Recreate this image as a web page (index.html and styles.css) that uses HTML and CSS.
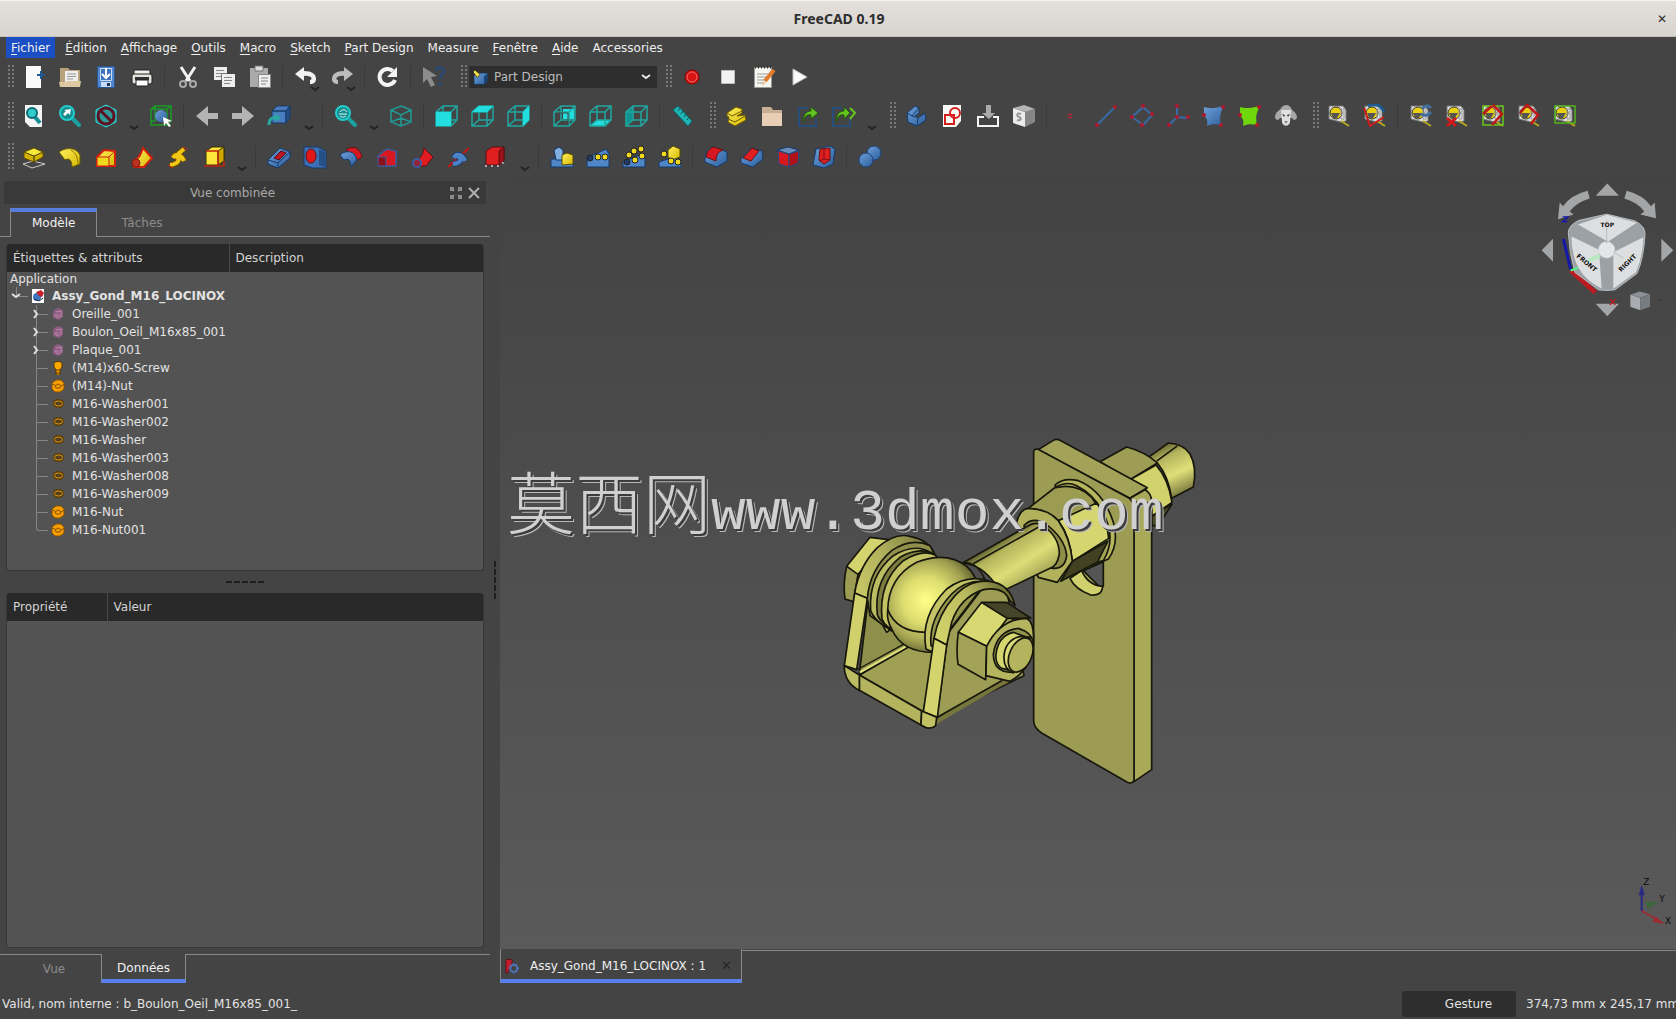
FILE: index.html
```html
<!DOCTYPE html>
<html lang="fr">
<head>
<meta charset="utf-8">
<title>FreeCAD 0.19</title>
<link rel="stylesheet" href="styles.css">
</head>
<body>
<svg class="defs" aria-hidden="true">
  <defs>
    <linearGradient id="gBlue" x1="0" y1="0" x2="1" y2="1"><stop offset="0" stop-color="#6f9fd8"/><stop offset="1" stop-color="#2c5f9e"/></linearGradient>
    <linearGradient id="gYellow" x1="0" y1="0" x2="1" y2="1"><stop offset="0" stop-color="#fff060"/><stop offset="1" stop-color="#d8b800"/></linearGradient>
  </defs>
  <symbol id="new" viewBox="0 0 24 24"><path fill="#fafafa" d="M4 1h15v22H4z"/><path stroke="#205a94" stroke-width="2" d="M19 6v8M15 10h8"/></symbol>
  <symbol id="open" viewBox="0 0 24 24"><path fill="#b8a27c" d="M2 3h8l2 2h10v15H2z"/><path fill="#eee" d="M7 6h13v11H7z"/><path stroke="#999" d="M9 9h9M9 11.500h9M9 14h6"/><path fill="#dcc8a2" d="M1 17h7l2-1h13l-1 6H2z"/></symbol>
  <symbol id="save" viewBox="0 0 24 24"><path fill="#4f86cf" stroke="#2b558d" d="M3.500 1.500h17v21h-17z"/><path fill="#3f74bd" stroke="#c9dbf2" d="M6.500 3.500h11v12h-11z"/><path fill="#c9dbf2" d="M7 17h10v5H7z"/><path stroke="#fff" fill="none" stroke-width="2" d="M12 3v9M8 9l4 4 4-4"/><path fill="#235" d="M13 18h3v3h-3z"/></symbol>
  <symbol id="print" viewBox="0 0 24 24"><path fill="#f0f0ea" stroke="#222" d="M4 5h16v5H4z"/><rect x="2" y="9" width="20" height="10" rx="2" fill="#e4e4dc" stroke="#222"/><path fill="#333" d="M5 12h14v3H5z"/><path fill="#fff" stroke="#222" d="M6 15h12v6H6z"/></symbol>
  <symbol id="cut" viewBox="0 0 24 24"><path stroke="#f2f2f2" stroke-width="3" d="M5 2l9 14M19 2l-9 14"/><g fill="none" stroke="#a9a9a9" stroke-width="2"><circle cx="7" cy="19" r="3"/><circle cx="17" cy="19" r="3"/></g></symbol>
  <symbol id="copy" viewBox="0 0 24 24"><path fill="#eee" d="M2 2h13v13H2zM10 9h13v13H10z"/><path stroke="#888" d="M4 5.500h8M4 8.500h8M4 11.500h5M12 12.500h8M12 15.500h8M12 18.500h6"/><path fill="none" stroke="#777" d="M9.500 15V8.500H15"/></symbol>
  <symbol id="paste" viewBox="0 0 24 24"><path fill="#aaa" d="M2 3h18v19H2z"/><path fill="#ddd" stroke="#777" d="M7 1h8v5H7z"/><path fill="#eee" stroke="#888" d="M10.500 9.500h12v13h-12z"/><path stroke="#888" d="M13 13h7M13 16h7M13 19h5"/></symbol>
  <symbol id="undo" viewBox="0 0 24 24"><path fill="#f2f2f2" d="M1 9l9-7v4c8 0 12 3 12 8 0 4-3 5-6 5v-4c3 0 2-5-6-4v5z"/></symbol>
  <symbol id="redo" viewBox="0 0 24 24"><path fill="#bdbdbd" d="M23 9l-9-7v4C6 6 2 9 2 14c0 4 3 5 6 5v-4c-3 0-2-5 6-4v5z"/></symbol>
  <symbol id="refresh" viewBox="0 0 24 24"><path fill="none" stroke="#f4f4f4" stroke-width="4" d="M17 6A8 8 0 1 0 19 15"/><path fill="#f4f4f4" d="M21 2v10H11z"/></symbol>
  <symbol id="whats" viewBox="0 0 24 24"><path fill="#8b8b8b" d="M1 2l14 9-6 1 4 8-4 2-4-8-4 4z"/><path fill="none" stroke="#2d4a70" stroke-width="3" d="M14 6c1-5 8-4 8 0 0 3-4 3-4 8"/><circle cx="18" cy="19" r="2" fill="#2d4a70"/></symbol>
  <symbol id="pd" viewBox="0 0 24 24"><path fill="url(#gBlue)" stroke="#15365f" d="M3 10l5-4h15v12l-5 5H3z"/><path fill="#f0e040" stroke="#222" d="M4 1l8 7-4 5-6-8z"/><path fill="#1d4479" d="M18 11l5-4v11l-5 5z"/></symbol>
  <symbol id="record" viewBox="0 0 24 24"><circle cx="12" cy="12" r="7" fill="#d81414" stroke="#8a0000"/><circle cx="12" cy="12" r="5" fill="none" stroke="#ee6a6a"/></symbol>
  <symbol id="stop" viewBox="0 0 24 24"><path fill="#f2f2f2" stroke="#bbb" d="M5.500 5.500h13v13h-13z"/></symbol>
  <symbol id="edit" viewBox="0 0 24 24"><path fill="#f6f6f0" stroke="#999" d="M2.500 2.500h17v20h-17z"/><path stroke="#999" d="M5 9h12M5 12h12M5 15h8M5 18h7"/><path stroke="#333" stroke-width="3" stroke-dasharray="1 2" d="M3 2h16"/><path stroke="#e07a28" stroke-width="4" d="M22 5l-9 11"/><path fill="#e8c8a0" d="M14 18l-4 3 1-5z"/></symbol>
  <symbol id="play" viewBox="0 0 24 24"><path fill="#fafafa" stroke="#bbb" d="M5 4l14 8-14 8z"/></symbol>
  <symbol id="mag" viewBox="0 0 24 24"><path stroke="#1aa0a0" stroke-width="4" stroke-linecap="round" d="M13 13l8 8"/><circle cx="9" cy="9" r="7" fill="#178c8c" stroke="#2cc" stroke-width="2"/></symbol>
  <symbol id="fitall" viewBox="0 0 24 24"><path fill="#f4f4f4" d="M3 1h17v22H8l-5-5z"/><path stroke="#178f94" stroke-width="4" d="M13 13l5 6"/><circle cx="10" cy="9" r="5" fill="#3cc" stroke="#0d6c74" stroke-width="2"/></symbol>
  <symbol id="fitsel" viewBox="0 0 24 24"><use href="#mag"/><path fill="#fff" d="M13 5l-1 6-2-2-3 3-2-2 3-3-2-1z"/></symbol>
  <symbol id="draw" viewBox="0 0 24 24"><path fill="#2f9a96" stroke="#2dd" d="M12 1l10 5v12l-10 5-10-5V6z"/><circle cx="12" cy="12" r="8" fill="none" stroke="#5e1224" stroke-width="3"/><path stroke="#5e1224" stroke-width="3" d="M6 6l12 12"/></symbol>
  <symbol id="bbox" viewBox="0 0 24 24"><path fill="none" stroke="#1a9a28" stroke-width="1.500" d="M2 5l4-3h16v15l-4 4H2zM2 5h16v16M18 5l4-3M6 2v15H2"/><circle cx="12" cy="12" r="6" fill="url(#gBlue)"/><path fill="#fff" d="M14 13l9 4-4 1 3 4-2 1-3-4-2 3z"/></symbol>
  <symbol id="left" viewBox="0 0 24 24"><path fill="#b4b4b4" d="M1 12l12-10v7h10v6H13v7z"/></symbol>
  <symbol id="right" viewBox="0 0 24 24"><path fill="#b4b4b4" d="M23 12L11 2v7H1v6h10v7z"/></symbol>
  <symbol id="link" viewBox="0 0 24 24"><path fill="#4a7dc0" stroke="#173a66" d="M5 7l5-5h13l-4 5zM5 7h14v12H5z"/><path fill="#274f87" stroke="#173a66" d="M19 7l4-5v12l-4 5z"/><path fill="none" stroke="#28a8a0" stroke-width="3" d="M2 21c0-6 3-8 7-7"/><path fill="#28a8a0" d="M8 9l6 5-6 4z"/></symbol>
  <symbol id="zoom" viewBox="0 0 24 24"><use href="#mag"/><path stroke="#dff" fill="none" d="M6 8c2-3 5-3 7 0M5 10h8M6 12c2 2 4 1 6 0"/></symbol>
  <symbol id="wire" viewBox="0 0 24 24"><path fill="none" stroke="#1f9a92" stroke-width="1.500" d="M12 2l10 4v12l-10 4-10-4V6zM2 6l10 5 10-5M12 11v11M2 18l10-4 10 4"/></symbol>
  <symbol id="cube" viewBox="0 0 24 24"><path fill="none" stroke="#1fa7a0" stroke-width="1.500" d="M1 8l7-6h14v14l-6 6H1zM1 8h15v14M16 8l6-6M8 2v14h14M1 22l7-6"/></symbol>
  <symbol id="front" viewBox="0 0 24 24"><use href="#cube"/><path fill="#22dede" d="M1 8h15v14H1z"/></symbol>
  <symbol id="top" viewBox="0 0 24 24"><use href="#cube"/><path fill="#22dede" d="M1 8l7-6h14l-6 6z"/></symbol>
  <symbol id="rightv" viewBox="0 0 24 24"><use href="#cube"/><path fill="#22dede" d="M16 8l6-6v14l-6 6z"/></symbol>
  <symbol id="rear" viewBox="0 0 24 24"><path fill="#22dede" d="M10 5h11v10H10z"/><use href="#cube"/><path fill="none" stroke="#444" d="M3 9h12v12"/></symbol>
  <symbol id="bottom" viewBox="0 0 24 24"><path fill="#22dede" d="M1 22l7-6h14l-6 6z"/><use href="#cube"/></symbol>
  <symbol id="leftv" viewBox="0 0 24 24"><path fill="#139090" d="M1 8l7-6v14l-7 6z"/><use href="#cube"/></symbol>
  <symbol id="ruler" viewBox="0 0 24 24"><path fill="#1fb5b5" stroke="#0c6a6c" d="M2 6l5-4 14 15-4 5z"/><path stroke="#0a5557" d="M9 4L7 7M12 7l-2 3M15 10l-2 3M18 13l-2 3"/></symbol>
  <symbol id="part" viewBox="0 0 24 24"><path fill="url(#gYellow)" stroke="#6b5a00" d="M3 9l9-6 6 2v4l-5 3 8-1 1 5-11 6-7-4 1-5-2-1z"/><path fill="none" stroke="#6b5a00" d="M3 9l5 3 10-5M4 15l7 3 10-6"/></symbol>
  <symbol id="group" viewBox="0 0 24 24"><path fill="#c7ae94" d="M2 3h9l2 3h9v16H2z"/><path fill="#e8cfb4" d="M2 9h20v13H2z"/></symbol>
  <symbol id="mklink" viewBox="0 0 24 24"><path fill="none" stroke="#274e7a" stroke-width="2" d="M12 4H3v18h17v-7"/><path fill="#65c520" stroke="#1d5c0c" d="M7 18c0-8 4-11 8-11V3l7 6-7 6v-4c-4-1-6 1-8 7z"/></symbol>
  <symbol id="mklinks" viewBox="0 0 24 24"><path fill="none" stroke="#274e7a" stroke-width="2" d="M10 4H1v18h17v-7"/><path fill="#65c520" stroke="#1d5c0c" d="M4 18c0-8 4-11 8-11V3l6 6-6 6v-4c-4-1-6 1-8 7z"/><path fill="none" stroke="#65c520" stroke-width="2" d="M18 4l5 5-5 6"/></symbol>
  <symbol id="body" viewBox="0 0 24 24"><path fill="url(#gBlue)" stroke="#153a6b" d="M3 9l8-7 4 2v5l-4 3 3 2 7-5 1 7-9 6-9-4z"/><path fill="none" stroke="#153a6b" d="M3 9l5 3 3 1M8 12l7-8M14 14l-1 8"/></symbol>
  <symbol id="sketch" viewBox="0 0 24 24"><path fill="#fbfbf5" d="M3 1h18v16l-5 6H3z"/><path fill="none" stroke="#d61e1e" stroke-width="2" d="M5 11h9v9H5z"/><circle cx="15" cy="9" r="5" fill="none" stroke="#d61e1e" stroke-width="2"/></symbol>
  <symbol id="import" viewBox="0 0 24 24"><path fill="#aaa" d="M10 1h5v8h4l-6 6-7-6h4z"/><path fill="none" stroke="#f4f4f4" stroke-width="2" d="M8 13H2v9h20v-9h-5"/></symbol>
  <symbol id="valid" viewBox="0 0 24 24"><path fill="#b4b4b4" d="M1 4l11-3 11 4-9 3z"/><path fill="#ececec" d="M1 4l12 4v15L1 19z"/><path fill="#868686" d="M13 8l10-3v13l-10 5z"/><path fill="none" stroke="#999" stroke-width="2" d="M9 10c-4-2-5 2-2 3s2 4-2 3"/></symbol>
  <symbol id="point" viewBox="0 0 24 24"><path stroke="#b82038" stroke-width="1.500" d="M10 10.500h4M10 13.500h4"/></symbol>
  <symbol id="dline" viewBox="0 0 24 24"><path stroke="#3b69a8" stroke-width="2" d="M3 21L21 3"/><g fill="#b2182c"><circle cx="3" cy="21" r="2"/><circle cx="21" cy="3" r="2"/></g></symbol>
  <symbol id="dplane" viewBox="0 0 24 24"><path fill="none" stroke="#3b69a8" stroke-width="2" d="M13 3l9 8-9 10L2 13z"/><g fill="#b2182c"><circle cx="13" cy="2" r="2"/><circle cx="22" cy="10" r="2"/><circle cx="2" cy="13" r="2"/><circle cx="12" cy="21" r="2"/></g></symbol>
  <symbol id="lcs" viewBox="0 0 24 24"><path fill="none" stroke="#3b69a8" stroke-width="2" d="M11 2v11l11 1M11 13l-8 8"/><g fill="#b2182c"><circle cx="11" cy="2" r="2"/><circle cx="22" cy="13" r="2"/><circle cx="3" cy="21" r="2"/><circle cx="11" cy="13" r="2"/></g></symbol>
  <symbol id="binder" viewBox="0 0 24 24"><path fill="url(#gBlue)" d="M2 3c7 2 11 1 20-1-3 6-5 10-3 19-6-1-10-1-14 1 1-5 0-8-3-10z"/><g fill="#b2182c"><circle cx="21" cy="3" r="2"/><circle cx="2" cy="11" r="2"/><circle cx="19" cy="21" r="2"/></g></symbol>
  <symbol id="binderg" viewBox="0 0 24 24"><path fill="#6fd80c" d="M2 3c7 2 11 1 20-1-3 6-5 10-3 19-6-1-10-1-14 1 1-5 0-8-3-10z"/><g fill="#b2182c"><circle cx="21" cy="3" r="2"/><circle cx="2" cy="11" r="2"/><circle cx="19" cy="21" r="2"/></g></symbol>
  <symbol id="sheep" viewBox="0 0 24 24"><path fill="#a8a8a8" d="M1 14C1 7 6 7 7 4c3-4 8-4 10 0 1 3 6 4 6 10-2 3-4 2-5 0H6c-1 2-3 3-5 0z"/><path fill="#e0e0e0" d="M7 6h10l-1 12c-1 5-7 5-8 0z"/><path fill="#333" d="M8 10l3 1-1 2zM16 10l-3 1 1 2z"/><path fill="#888" d="M10 17h4l-2 3z"/></symbol>
  <symbol id="tape" viewBox="0 0 24 24"><path fill="#ddd" stroke="#777" d="M2 2h14l3 4v11l-5 1-12-3z"/><circle cx="9" cy="9" r="6" fill="#e8cf10" stroke="#333"/><path fill="#555" d="M4 9h9l-3 5H6z"/><path fill="none" stroke="#999" d="M14 5h3v10h-3z"/><path stroke="#b8a820" stroke-width="2" d="M14 17l8 5"/></symbol>
  <symbol id="mang" viewBox="0 0 24 24"><use href="#tape"/><path fill="none" stroke="#1d5c8f" stroke-width="3" d="M5 2c7-3 13-1 16 6"/><path fill="none" stroke="#d01818" stroke-width="2" d="M1 4l6 18 14-9"/></symbol>
  <symbol id="mref" viewBox="0 0 24 24"><use href="#tape"/><path fill="none" stroke="#416f9e" stroke-width="3" d="M13 5c3-4 6-4 9-1M22 8c-3 4-7 4-10 2"/></symbol>
  <symbol id="mclr" viewBox="0 0 24 24"><use href="#tape"/><path stroke="#d01818" stroke-width="3" d="M2 14l9 8M11 14l-9 8"/></symbol>
  <symbol id="mtog" viewBox="0 0 24 24"><use href="#tape"/><path fill="none" stroke="#68c81a" stroke-width="1.500" d="M2 2h20v19H2z"/><path fill="none" stroke="#c01818" stroke-width="2.500" d="M12 1l9 9-10 11M2 10l9-8"/></symbol>
  <symbol id="m3d" viewBox="0 0 24 24"><use href="#tape"/><path fill="none" stroke="#c01818" stroke-width="2.500" d="M3 9l7-8 11 10-7 9"/></symbol>
  <symbol id="mdel" viewBox="0 0 24 24"><use href="#tape"/><path fill="none" stroke="#52b41a" stroke-width="1.500" d="M2 2h20v17H2z"/></symbol>
  <symbol id="pad" viewBox="0 0 24 24"><path fill="none" stroke="#ccc" d="M1 19l10-3 12 3-13 4z"/><path fill="#d4b400" stroke="#5c4c00" d="M2 7l10 4v6L2 13zM12 11l9-4v5l-9 5z"/><path fill="#f8ea3c" stroke="#5c4c00" d="M2 7l10-4 9 4-9 4z"/></symbol>
  <symbol id="rev" viewBox="0 0 24 24"><path fill="url(#gYellow)" stroke="#6b5a00" d="M1 7C8 2 18 2 22 10v9l-8 3c0-8-4-9-7-7z"/><path fill="none" stroke="#8b7700" d="M13 5c5 3 7 8 7 14"/></symbol>
  <symbol id="loft" viewBox="0 0 24 24"><path fill="url(#gYellow)" stroke="#d02010" stroke-width="2" d="M3 12l7-7 11 1v15H3z"/><path fill="#f0d820" stroke="#d02010" d="M3 12h12v9H3zM15 12l6-6"/></symbol>
  <symbol id="pipe" viewBox="0 0 24 24"><path fill="url(#gYellow)" stroke="#d02010" stroke-width="2" d="M13 3l9 10-8 9H4v-7c5-1 7-6 9-12z"/><circle cx="6" cy="18" r="4" fill="#bb3220" stroke="#7a1d10"/></symbol>
  <symbol id="helix" viewBox="0 0 24 24"><path fill="none" stroke="#6b4a00" stroke-width="6" d="M4 20c8-1 12-6 5-9M7 13c3-6 9-2 11 3M12 9l6-5"/><path fill="none" stroke="#f0c818" stroke-width="4" d="M4 20c8-1 12-6 5-9M7 13c3-6 9-2 11 3M12 9l6-5"/><path fill="none" stroke="#d02010" d="M2 20l5 3M17 2l5 3"/></symbol>
  <symbol id="box" viewBox="0 0 24 24"><path fill="#ffe63a" stroke="#3a3000" d="M4 6l6-4h12v14l-6 4H4z"/><path fill="#cda900" stroke="#3a3000" d="M16 6l6-4v14l-6 4z"/><path fill="none" stroke="#c02010" stroke-width="1.500" d="M4 6h12v15M2 21h20v-5"/></symbol>
  <symbol id="pocket" viewBox="0 0 24 24"><path fill="url(#gBlue)" stroke="#153a6b" d="M1 15L13 3l10 4v6L11 23 1 19z"/><path fill="none" stroke="#153a6b" d="M1 15l10 3L23 7M11 18v5"/><path fill="#b81424" stroke="#5b0f18" d="M7 13l7-7 5 2-7 7z"/></symbol>
  <symbol id="hole" viewBox="0 0 24 24"><path fill="#3c6fb4" stroke="#153a6b" d="M1 2h14l8 4v17H9l-8-3z"/><path fill="#264f86" d="M16 4l6 3v15l-6-2z"/><ellipse cx="8" cy="11" rx="5" ry="7" fill="#e01818" stroke="#611"/></symbol>
  <symbol id="groove" viewBox="0 0 24 24"><path fill="#d81820" stroke="#611" d="M8 4c8-4 13 0 15 8l-5 3C15 7 12 7 8 10z"/><path fill="url(#gBlue)" stroke="#153a6b" d="M1 10c7-6 15-4 17 5l-6 7c0-7-3-9-7-7z"/></symbol>
  <symbol id="sloft" viewBox="0 0 24 24"><path fill="#d81820" stroke="#3a5ca0" stroke-width="1.500" d="M3 11l9-7 9 2v15H5z"/><path fill="#8a1220" stroke="#3a5ca0" d="M3 12h8v9H3z"/></symbol>
  <symbol id="spipe" viewBox="0 0 24 24"><path fill="#e01c20" stroke="#611" d="M13 3l9 9-7 9H5v-6c5-1 7-6 8-12z"/><circle cx="6" cy="18" r="4" fill="#992238" stroke="#3a5ca0" stroke-width="2"/></symbol>
  <symbol id="shelix" viewBox="0 0 24 24"><path stroke="#c01818" stroke-width="2" d="M1 22L22 3"/><path fill="none" stroke="#1d3a68" stroke-width="6" d="M6 19c8-1 10-5 4-8M7 13c2-6 9-3 11 3"/><path fill="none" stroke="#4c82c8" stroke-width="4" d="M6 19c8-1 10-5 4-8M7 13c2-6 9-3 11 3"/></symbol>
  <symbol id="sbox" viewBox="0 0 24 24"><path fill="#e02020" stroke="#511" d="M3 6l6-4h12v14l-5 4H3z"/><path fill="#a01018" stroke="#511" d="M16 6l5-4v14l-5 4z"/><path fill="none" stroke="#aab" stroke-width="2" stroke-dasharray="2 4" d="M2 21h14l6-5"/></symbol>
  <symbol id="mirror" viewBox="0 0 24 24"><path fill="#4f86c8" stroke="#153a6b" d="M1 14h22v8H1z"/><path fill="#7fb0e0" stroke="#153a6b" d="M4 5l5-3 4 3v10H6z"/><path fill="url(#gYellow)" stroke="#5c4c00" d="M12 10l5-2 6 2v9l-11 1z"/></symbol>
  <symbol id="linear" viewBox="0 0 24 24"><path fill="#4f86c8" stroke="#153a6b" d="M1 13L20 4l3 5v13H1z"/><g fill="#f0d820" stroke="#222"><circle cx="4" cy="13" r="3" fill="#223a66"/><circle cx="12" cy="12" r="3"/><circle cx="19" cy="12" r="3"/></g></symbol>
  <symbol id="polar" viewBox="0 0 24 24"><path fill="#4f86c8" stroke="#153a6b" d="M1 17L20 9l3 4v9H1z"/><g fill="#f0d820" stroke="#222"><circle cx="12" cy="6" r="3"/><circle cx="19" cy="4" r="3"/><circle cx="7" cy="10" r="3"/><circle cx="20" cy="11" r="3"/><circle cx="13" cy="15" r="3"/><circle cx="5" cy="17" r="3" fill="#223a66"/></g></symbol>
  <symbol id="multi" viewBox="0 0 24 24"><path fill="#4f86c8" stroke="#153a6b" d="M1 17l15-5 7 3v7H1z"/><path fill="url(#gYellow)" stroke="#5c4c00" d="M10 5l5-4 7 3v8l-8 3-4-3z"/><g fill="#f0d820" stroke="#222"><circle cx="6" cy="9" r="3"/><circle cx="13" cy="16" r="3"/><circle cx="20" cy="17" r="3"/></g></symbol>
  <symbol id="fillet" viewBox="0 0 24 24"><path fill="url(#gBlue)" stroke="#153a6b" d="M1 13c0-6 4-10 9-11l13 5v9l-10 6-12-5z"/><path fill="#d81820" stroke="#611" d="M2 12c1-6 4-9 8-10l9 3c-5 2-7 5-7 11z"/></symbol>
  <symbol id="chamfer" viewBox="0 0 24 24"><path fill="url(#gBlue)" stroke="#153a6b" d="M1 14L11 3l11 3 1 8-10 8-12-4z"/><path fill="#e02020" stroke="#611" d="M3 13l9-10 7 3-8 10z"/></symbol>
  <symbol id="draft" viewBox="0 0 24 24"><path fill="#6a8cb8" stroke="#153a6b" d="M1 5l11-3 11 3-10 4z"/><path fill="#d81820" stroke="#234a80" d="M2 6l11 3v13L3 19z"/><path fill="#b01018" stroke="#234a80" d="M13 9l10-3-1 12-9 4z"/></symbol>
  <symbol id="thick" viewBox="0 0 24 24"><path fill="url(#gBlue)" stroke="#153a6b" d="M4 4l14-3 5 3-2 15-9 4-11-3z"/><path fill="#e02020" stroke="#611" d="M8 4l10-1v12l-6 4-5-4z"/><path fill="none" stroke="#7a0f18" d="M12 4v10l-5 2M12 14l6 1"/></symbol>
  <symbol id="bool" viewBox="0 0 24 24"><g fill="url(#gBlue)" stroke="#1c4478"><circle cx="16" cy="8" r="7"/><circle cx="8" cy="15" r="7"/></g></symbol>
  <symbol id="chev" viewBox="0 0 10 6"><path fill="none" stroke="currentColor" stroke-width="2" d="M1 1l4 3 4-3"/></symbol>
  <symbol id="t-doc" viewBox="0 0 14 14"><path fill="#fff" d="M1 0h12v14H1z"/><circle cx="6" cy="8" r="4" fill="#3c78c0"/><path fill="#c8202c" d="M5 3l5-2 3 3-2 4-3-1z"/><path stroke="#224" fill="none" d="M3 10l5 2 4-3"/></symbol>
  <symbol id="t-asm" viewBox="0 0 14 14"><path fill="#8e5c80" d="M3 3l4-2 5 2v7l-4 3-6-2V6z"/><path fill="none" stroke="#b98aac" d="M5 5l5-1v5l-4 2-2-3h4"/></symbol>
  <symbol id="t-screw" viewBox="0 0 14 14"><path fill="#ffa800" stroke="#553600" d="M3 2c2-2 6-2 8 0v4L9 9v5H5V9L3 6z"/><path stroke="#553600" d="M5 9h4M5 12h4"/></symbol>
  <symbol id="t-nut" viewBox="0 0 14 14"><path fill="#f59e05" stroke="#8a5200" d="M1 4l4-3h5l3 3v6l-4 3H4l-3-3z"/><path stroke="#8a5200" fill="none" d="M4 7l3-2 3 2-1 2H5zM1 5l3 1M10 7l3-2"/></symbol>
  <symbol id="t-washer" viewBox="0 0 14 14"><ellipse cx="7.500" cy="6.500" rx="5.500" ry="4.500" fill="#5e3e04"/><ellipse cx="7.500" cy="6.500" rx="4" ry="2.500" fill="#54401c" stroke="#d8981a"/></symbol>
</svg>

<header class="titlebar"><h1>FreeCAD 0.19</h1><button class="win-close" aria-label="Fermer">✕</button></header>

<nav class="menubar">
  <button class="menu active"><u>F</u>ichier</button><button class="menu"><u>É</u>dition</button><button class="menu"><u>A</u>ffichage</button><button class="menu"><u>O</u>utils</button><button class="menu"><u>M</u>acro</button><button class="menu"><u>S</u>ketch</button><button class="menu"><u>P</u>art Design</button><button class="menu">Measure</button><button class="menu"><u>F</u>enêtre</button><button class="menu"><u>A</u>ide</button><button class="menu">Accessories</button>
</nav>

<div class="toolrow first">
  <div class="toolbar"><i class="grip"></i>
    <button class="tool"><svg><use href="#new"/></svg></button><button class="tool"><svg><use href="#open"/></svg></button><button class="tool"><svg><use href="#save"/></svg></button><button class="tool"><svg><use href="#print"/></svg></button><i class="sep"></i>
    <button class="tool"><svg><use href="#cut"/></svg></button><button class="tool"><svg><use href="#copy"/></svg></button><button class="tool"><svg><use href="#paste"/></svg></button><i class="sep"></i>
    <button class="tool"><svg><use href="#undo"/></svg><svg class="drop"><use href="#chev"/></svg></button><button class="tool"><svg><use href="#redo"/></svg><svg class="drop"><use href="#chev"/></svg></button><i class="sep"></i>
    <button class="tool"><svg><use href="#refresh"/></svg></button><i class="sep"></i><button class="tool"><svg><use href="#whats"/></svg></button>
  </div>
  <div class="toolbar"><i class="grip"></i>
    <div class="combo"><svg class="combo-icon"><use href="#pd"/></svg><select aria-label="Atelier"><option>Part Design</option></select><svg class="combo-arrow"><use href="#chev"/></svg></div>
  </div>
  <div class="toolbar"><i class="grip"></i>
    <button class="tool"><svg><use href="#record"/></svg></button><button class="tool"><svg><use href="#stop"/></svg></button><button class="tool"><svg><use href="#edit"/></svg></button><button class="tool"><svg><use href="#play"/></svg></button>
  </div>
</div>
<div class="toolrow">
  <div class="toolbar"><i class="grip"></i>
    <button class="tool"><svg><use href="#fitall"/></svg></button><button class="tool"><svg><use href="#fitsel"/></svg></button><button class="tool menu-tool"><svg><use href="#draw"/></svg><svg class="drop"><use href="#chev"/></svg></button><button class="tool"><svg><use href="#bbox"/></svg></button><i class="sep"></i>
    <button class="tool"><svg><use href="#left"/></svg></button><button class="tool"><svg><use href="#right"/></svg></button><button class="tool menu-tool wide"><svg><use href="#link"/></svg><svg class="drop"><use href="#chev"/></svg></button><i class="sep"></i>
    <button class="tool menu-tool"><svg><use href="#zoom"/></svg><svg class="drop"><use href="#chev"/></svg></button><button class="tool"><svg><use href="#wire"/></svg></button><i class="sep"></i>
    <button class="tool"><svg><use href="#front"/></svg></button><button class="tool"><svg><use href="#top"/></svg></button><button class="tool"><svg><use href="#rightv"/></svg></button><i class="sep"></i>
    <button class="tool"><svg><use href="#rear"/></svg></button><button class="tool"><svg><use href="#bottom"/></svg></button><button class="tool"><svg><use href="#leftv"/></svg></button><i class="sep"></i>
    <button class="tool"><svg><use href="#ruler"/></svg></button>
  </div>
  <div class="toolbar"><i class="grip"></i>
    <button class="tool"><svg><use href="#part"/></svg></button><button class="tool"><svg><use href="#group"/></svg></button><button class="tool"><svg><use href="#mklink"/></svg></button><button class="tool menu-tool"><svg><use href="#mklinks"/></svg><svg class="drop"><use href="#chev"/></svg></button>
  </div>
  <div class="toolbar"><i class="grip"></i>
    <button class="tool"><svg><use href="#body"/></svg></button><button class="tool"><svg><use href="#sketch"/></svg></button><button class="tool"><svg><use href="#import"/></svg></button><button class="tool"><svg><use href="#valid"/></svg></button><i class="sep"></i>
    <button class="tool"><svg><use href="#point"/></svg></button><button class="tool"><svg><use href="#dline"/></svg></button><button class="tool"><svg><use href="#dplane"/></svg></button><button class="tool"><svg><use href="#lcs"/></svg></button><button class="tool"><svg><use href="#binder"/></svg></button><button class="tool"><svg><use href="#binderg"/></svg></button><button class="tool"><svg><use href="#sheep"/></svg></button>
  </div>
  <div class="toolbar"><i class="grip"></i>
    <button class="tool"><svg><use href="#tape"/></svg></button><button class="tool"><svg><use href="#mang"/></svg></button><i class="sep"></i>
    <button class="tool"><svg><use href="#mref"/></svg></button><button class="tool"><svg><use href="#mclr"/></svg></button><button class="tool"><svg><use href="#mtog"/></svg></button><button class="tool"><svg><use href="#m3d"/></svg></button><button class="tool"><svg><use href="#mdel"/></svg></button>
  </div>
</div>
<div class="toolrow">
  <div class="toolbar"><i class="grip"></i>
    <button class="tool"><svg><use href="#pad"/></svg></button><button class="tool"><svg><use href="#rev"/></svg></button><button class="tool"><svg><use href="#loft"/></svg></button><button class="tool"><svg><use href="#pipe"/></svg></button><button class="tool"><svg><use href="#helix"/></svg></button><button class="tool menu-tool"><svg><use href="#box"/></svg><svg class="drop"><use href="#chev"/></svg></button><i class="sep"></i>
    <button class="tool"><svg><use href="#pocket"/></svg></button><button class="tool"><svg><use href="#hole"/></svg></button><button class="tool"><svg><use href="#groove"/></svg></button><button class="tool"><svg><use href="#sloft"/></svg></button><button class="tool"><svg><use href="#spipe"/></svg></button><button class="tool"><svg><use href="#shelix"/></svg></button><button class="tool menu-tool wide"><svg><use href="#sbox"/></svg><svg class="drop"><use href="#chev"/></svg></button><i class="sep"></i>
    <button class="tool"><svg><use href="#mirror"/></svg></button><button class="tool"><svg><use href="#linear"/></svg></button><button class="tool"><svg><use href="#polar"/></svg></button><button class="tool"><svg><use href="#multi"/></svg></button><i class="sep"></i>
    <button class="tool"><svg><use href="#fillet"/></svg></button><button class="tool"><svg><use href="#chamfer"/></svg></button><button class="tool"><svg><use href="#draft"/></svg></button><button class="tool"><svg><use href="#thick"/></svg></button><i class="sep"></i>
    <button class="tool"><svg><use href="#bool"/></svg></button>
  </div>
</div>

<main class="workspace">
  <aside class="dock">
    <div class="dock-title"><span>Vue combinée</span>
      <button aria-label="Détacher"><svg viewBox="0 0 14 14"><path fill="none" stroke="#8c8c8c" stroke-width="2" d="M2 5V2h3M9 2h3v3M2 9v3h3M12 9v3H9M2 2l3 3M12 2L9 5M2 12l3-3M12 12L9 9"/></svg></button>
      <button aria-label="Fermer"><svg viewBox="0 0 14 14"><path stroke="#b0b0b0" stroke-width="2" d="M2 2l10 10M12 2L2 12"/></svg></button>
    </div>
    <div class="tabs top"><button class="tab on">Modèle</button><button class="tab">Tâches</button></div>
    <div class="box tree">
      <table>
        <colgroup><col class="c-label"><col></colgroup>
        <thead><tr><th>Étiquettes &amp; attributs</th><th>Description</th></tr></thead>
        <tbody>
          <tr class="app"><td colspan="2">Application</td></tr>
          <tr><td colspan="2"><div class="node root"><svg class="twist"><use href="#chev"/></svg><svg class="ico"><use href="#t-doc"/></svg><b>Assy_Gond_M16_LOCINOX</b></div></td></tr>
          <tr><td colspan="2"><div class="node parent"><svg class="twist"><use href="#chev"/></svg><svg class="ico"><use href="#t-asm"/></svg>Oreille_001</div></td></tr>
          <tr><td colspan="2"><div class="node parent"><svg class="twist"><use href="#chev"/></svg><svg class="ico"><use href="#t-asm"/></svg>Boulon_Oeil_M16x85_001</div></td></tr>
          <tr><td colspan="2"><div class="node parent"><svg class="twist"><use href="#chev"/></svg><svg class="ico"><use href="#t-asm"/></svg>Plaque_001</div></td></tr>
          <tr><td colspan="2"><div class="node leaf"><svg class="ico"><use href="#t-screw"/></svg>(M14)x60-Screw</div></td></tr>
          <tr><td colspan="2"><div class="node leaf"><svg class="ico"><use href="#t-nut"/></svg>(M14)-Nut</div></td></tr>
          <tr><td colspan="2"><div class="node leaf"><svg class="ico"><use href="#t-washer"/></svg>M16-Washer001</div></td></tr>
          <tr><td colspan="2"><div class="node leaf"><svg class="ico"><use href="#t-washer"/></svg>M16-Washer002</div></td></tr>
          <tr><td colspan="2"><div class="node leaf"><svg class="ico"><use href="#t-washer"/></svg>M16-Washer</div></td></tr>
          <tr><td colspan="2"><div class="node leaf"><svg class="ico"><use href="#t-washer"/></svg>M16-Washer003</div></td></tr>
          <tr><td colspan="2"><div class="node leaf"><svg class="ico"><use href="#t-washer"/></svg>M16-Washer008</div></td></tr>
          <tr><td colspan="2"><div class="node leaf"><svg class="ico"><use href="#t-washer"/></svg>M16-Washer009</div></td></tr>
          <tr><td colspan="2"><div class="node leaf"><svg class="ico"><use href="#t-nut"/></svg>M16-Nut</div></td></tr>
          <tr><td colspan="2"><div class="node leaf last"><svg class="ico"><use href="#t-nut"/></svg>M16-Nut001</div></td></tr>
        </tbody>
      </table>
    </div>
    <div class="split-h"><i></i></div>
    <div class="box props">
      <table><colgroup><col class="c-prop"><col></colgroup><thead><tr><th>Propriété</th><th>Valeur</th></tr></thead></table>
    </div>
    <div class="tabs bottom"><button class="tab">Vue</button><button class="tab on">Données</button></div>
  </aside>
  <div class="split-v"><i></i></div>
  <section class="mdi">
    <div class="view">
      <svg class="model" viewBox="0 0 1200 1140">
        <defs>
          <linearGradient id="shaft" gradientUnits="userSpaceOnUse" x1="510" y1="375" x2="600" y2="515"><stop offset="0" stop-color="#4e4e28"/><stop offset=".22" stop-color="#b4b45c"/><stop offset=".6" stop-color="#dede78"/><stop offset="1" stop-color="#a2a254"/></linearGradient>
          <linearGradient id="tip" gradientUnits="userSpaceOnUse" x1="1020" y1="80" x2="1090" y2="225"><stop offset="0" stop-color="#66662f"/><stop offset=".25" stop-color="#b4b45e"/><stop offset=".6" stop-color="#e0e07a"/><stop offset="1" stop-color="#77773e"/></linearGradient>
          <radialGradient id="ball" gradientUnits="userSpaceOnUse" cx="318" cy="545" r="170"><stop offset="0" stop-color="#ffff88"/><stop offset=".4" stop-color="#dede70"/><stop offset=".75" stop-color="#a0a050"/><stop offset="1" stop-color="#57572b"/></radialGradient>
          <linearGradient id="band" gradientUnits="userSpaceOnUse" x1="110" y1="520" x2="330" y2="380"><stop offset="0" stop-color="#c8c866"/><stop offset=".5" stop-color="#b0b05c"/><stop offset="1" stop-color="#7c7c3f"/></linearGradient>
          <linearGradient id="band2" gradientUnits="userSpaceOnUse" x1="340" y1="660" x2="570" y2="510"><stop offset="0" stop-color="#d6d66e"/><stop offset=".55" stop-color="#bcbc60"/><stop offset="1" stop-color="#6a6a35"/></linearGradient>
        </defs>
        <g stroke="#17170c" stroke-width="5" stroke-linejoin="round" stroke-linecap="round">
          <path fill="url(#tip)" d="M985 115L1045 72Q1090 75 1110 105Q1132 145 1120 204L1055 238Q1045 170 1012 132Z"/>
          <path fill="none" d="M1012 125L1070 82"/>
          <path fill="#9d9d55" d="M840 128L920 84Q975 98 1012 132L930 182Z"/>
          <path fill="#d2d26d" d="M930 182L1008 138Q1045 180 1056 250L995 292V245L975 208Z"/>
          <path fill="#4c4c29" d="M995 292L1056 255L1015 320L995 320Z"/>
          <path fill="#a2a258" d="M655 92L700 64Q710 58 720 64L982 206L930 238Z"/>
          <path fill="#a9a95a" d="M930 238L975 212Q995 222 995 250V1052L942 1088V262Q940 245 930 238Z"/>
          <path fill="#9c9c54" d="M641 97Q645 86 657 92L925 236Q942 248 942 270V1085Q935 1096 922 1090L665 942Q641 925 641 905Z"/>
          <path fill="#555" d="M790 455L850 428V500Q845 512 835 500Q805 470 790 455Z"/>
          <path fill="#d0d06c" d="M750 478L785 455Q805 500 848 502Q845 532 812 528Q765 510 750 478Z"/>
          <path fill="#b6b65e" d="M705 198Q730 175 775 185Q850 215 880 310Q898 375 865 420L820 440Z"/>
          <path fill="#a6a658" d="M705 205Q740 185 770 200Q840 235 865 320Q880 375 850 425L790 440Z"/>
          <path fill="#9b9b52" d="M625 268L703 207Q770 190 815 235L830 258L715 305Q680 272 625 268Z"/>
          <path fill="#d6d670" d="M715 305L830 252Q860 295 866 358L757 427Q750 350 715 305Z"/>
          <path fill="#424223" d="M757 427L864 366L832 430L722 487Z"/>
          <path fill="#b2b25d" d="M590 310Q600 270 625 268Q685 270 715 305Q752 360 757 427L712 490L655 475Z"/>
          <path fill="#8d8d49" d="M612 320Q635 295 670 310Q735 355 740 410Q735 450 700 448L640 440Z"/>
          <path fill="url(#shaft)" d="M428 432L625 320Q650 305 672 322Q718 355 718 405Q712 442 690 448L540 520Q500 440 428 432Z"/>
          <path fill="none" d="M462 433L660 322M428 432Q470 425 495 482"/>
          <!-- bracket floor -->
          <path fill="#8f8f4c" d="M145 535L330 640L345 720L310 880L118 765Z"/>
          <path fill="#a0a055" d="M118 768L270 678L345 700L310 878Z"/>
          <path fill="none" stroke="#dede7c" stroke-width="7" d="M122 758L255 684"/>
          <path fill="none" stroke-width="4" d="M115 750L250 676M120 768L270 682"/>
          <path fill="#b4b45e" d="M118 768L305 876L303 918L118 814Z"/>
          <path fill="#bcbc62" d="M73 740L118 768V814Q72 790 73 740Z"/>
          <!-- bolt head -->
          <path fill="#d4d46e" d="M80 442L150 355L205 362L112 468Z"/>
          <path fill="#9c9c54" d="M80 442L114 466L100 548L75 540Q68 495 80 442Z"/>
          <!-- rear ear and washers -->
          <path fill="url(#band)" d="M104 522Q118 440 172 386Q225 340 270 352Q330 364 345 408L250 600L200 640L145 540Z"/>
          <path fill="#d0d06c" d="M104 522L142 538L110 752L73 740Z"/>
          <path fill="#8f8f4b" d="M142 538Q150 450 215 395Q275 355 330 380L345 410L215 636L150 590Z"/>
          <path fill="#bcbc62" d="M152 575Q145 470 220 410Q285 370 335 402L240 640Q170 620 152 575Z"/>
          <path fill="#7d7d40" d="M172 588Q160 480 240 415Q300 380 345 408L240 640Q185 620 172 588Z"/>
          <path fill="#c2c265" d="M186 600Q175 490 250 425Q310 388 350 410L240 645Q195 625 186 600Z"/>
          <path fill="url(#ball)" d="M203 575Q205 475 290 430Q380 395 440 442Q470 470 470 500L340 700Q245 700 215 630Q200 605 203 575Z"/>
          <path fill="none" d="M203 572Q230 640 318 640"/>
          <!-- front ear -->
          <path fill="#9d9d55" d="M380 678Q390 590 445 535Q510 490 560 515L612 770L350 897Z"/>
          <path fill="#c4c466" d="M318 690Q300 590 380 510Q440 465 505 485L340 700Z"/>
          <path fill="#96964d" d="M333 680Q325 600 395 525Q440 480 500 487L345 690Z"/>
          <path fill="url(#band2)" d="M342 658Q355 585 405 530Q450 480 510 487Q570 495 585 560L570 545Q550 500 490 512Q420 535 395 610L380 678Z"/>
          <path fill="#d4d46f" d="M342 658L380 678L352 895L310 878Z"/>
          <path fill="#c2c265" d="M305 876L350 895L347 920Q330 936 303 918Z"/>
          <path fill="#77773d" stroke="none" d="M354 896L545 786L600 772L545 800L350 915Z"/>
          <path fill="none" d="M352 895L545 785"/>
          <!-- front nut -->
          <path fill="#d8d872" d="M485 550L562 598L500 682L415 640Z"/>
          <path fill="#a3a358" d="M415 640L500 682L497 782L414 736Q408 690 415 640Z"/>
          <path fill="#45452a" d="M485 550L560 550L632 597L562 598Z"/>
          <path fill="#b5b55f" d="M500 682Q540 600 620 598Q645 612 640 680Q630 755 570 787L498 770Z"/>
          <path fill="#93934c" d="M520 705Q530 635 595 628Q635 640 640 670L575 760Q520 760 520 705Z"/>
          <path fill="#d6d670" d="M528 705Q535 650 580 640L630 658L575 755L545 748Q525 735 528 705Z"/>
          <path fill="#dada78" d="M552 712Q555 665 600 652L630 655L580 762Q550 750 552 712Z"/>
          <ellipse cx="602" cy="708" rx="33" ry="54" transform="rotate(24 602 708)" fill="#b4b45e"/>
        </g>
      </svg>
      <div class="watermark">莫西网<span>www.3dmox.com</span></div>
      <svg class="navcube" viewBox="1020 280 408 410">
        <g fill="#a3a5a6"><path d="M1222 284l35 37h-70zM1222 682l-35-37h70zM1025 484l34-34v69zM1420 484l-36-34v69z"/>
        <path d="M1163 306l6 23q-42 13-60 39l12 9-47 14 5-50 10 11q25-34 74-46zM1280 306l-7 23q42 13 60 39l-12 9 47 11-4-47-11 11q-25-34-73-46z"/></g>
        <path stroke="#1518a8" stroke-width="9" d="M1090 450l22 92"/><path stroke="#1518a8" stroke-width="4" fill="none" d="M1088 384h15l-15 14h15"/>
        <path stroke="#b91d22" stroke-width="15" d="M1112 545l74 66"/><path stroke="#b91d22" stroke-width="4" d="M1230 630l16 18M1246 630l-16 18"/>
        <path fill="#9ba1a5" stroke="#b9bdc0" stroke-width="3" d="M1220 376l84 20q32 16 31 40-3 70-24 118l-66 49q-24 4-50 0l-70-52q-18-60-20-120 0-20 30-36z"/>
        <path fill="#dcdedf" d="M1220 378l90 24-86 57-90-52zM1115 443l82 40 8 116q-64-30-82-92-10-40-8-64zM1240 490l90-45q-2 60-22 105l-68 50z"/>
        <circle cx="1220" cy="483" r="25" fill="#e4e6e7" stroke="#b8bcbf"/><path stroke="#777" d="M1220 395v70M1240 490l30 17"/>
        <path stroke="#4dff80" stroke-width="6" d="M1112 545l22-8"/><path stroke="#b7e9c3" stroke-width="12" d="M1165 515l35-14"/>
        <g font-family="DejaVu Sans, sans-serif" font-weight="bold" fill="#111" text-anchor="middle"><text x="1222" y="415" font-size="18">TOP</text><text font-size="19" transform="translate(1156 527) rotate(40)">FRONT</text><text font-size="19" transform="translate(1287 527) rotate(-44)">RIGHT</text></g>
        <path fill="#8d9195" d="M1291 618l28-10 31 8-27 10z"/><path fill="#a9adb1" d="M1291 618l30 9v37l-30-10z"/><path fill="#777c80" d="M1321 627l29-10v37l-29 10z"/><path stroke="#383838" stroke-width="3" d="M1374 634h12"/>
      </svg>
      <svg class="axes" viewBox="765 50 135 150">
        <path stroke="#292983" stroke-width="6" d="M797 155v-55"/><path fill="#292983" d="M797 76l9 32h-18z"/>
        <path stroke="#a02830" stroke-width="5" d="M797 155l45 25"/><path fill="#a02830" d="M866 194l-36-7 8-16z"/><path fill="#3c663c" d="M808 128l40 0-32 22z"/>
        <g font-family="DejaVu Sans, sans-serif" font-size="27" fill="#0c0c0c"><text x="802" y="78">Z</text><text x="850" y="129">Y</text><text x="867" y="194">X</text></g>
      </svg>
    </div>
    <div class="doc-tabs">
      <div class="doc-tab"><svg viewBox="0 0 16 18"><path fill="#c01c2c" stroke="#5c1018" d="M1 1h7v6L3 16H1z"/><circle cx="10" cy="11" r="4" fill="none" stroke="#4c78c0" stroke-width="2"/><circle cx="10" cy="11" r="5.500" fill="none" stroke="#4c78c0" stroke-dasharray="2 2"/></svg><span>Assy_Gond_M16_LOCINOX : 1</span><button aria-label="Fermer">✕</button></div>
    </div>
  </section>
</main>

<footer class="status"><span class="msg">Valid, nom interne : b_Boulon_Oeil_M16x85_001_</span><button class="nav-style">Gesture</button><span class="dims">374,73 mm x 245,17 mm</span></footer>
</body>
</html>
```
FILE: styles.css
```css
* { box-sizing: border-box; }
html, body { height: 100%; }
body {
  margin: 0;
  display: flex;
  flex-direction: column;
  overflow: hidden;
  background: #444;
  color: #e2e2e2;
  font: 12px/18px "DejaVu Sans", sans-serif;
}
button { font: inherit; color: inherit; background: none; border: 0; padding: 0; }
i { font-style: normal; }
.defs { position: absolute; width: 0; height: 0; }

.titlebar {
  flex: none;
  display: flex;
  align-items: center;
  height: 37px;
  padding-right: 8px;
  background: linear-gradient(#e3dfdb, #d8d4cf);
  border-top: 1px solid #f6f4f2;
  border-bottom: 1px solid #c4c2ba;
  color: #2e2e2e;
}
.titlebar h1 {
  flex: 1;
  margin: 0;
  padding-left: 22px;
  text-align: center;
  font: bold 14px/20px "Noto Sans", sans-serif;
}
.win-close { width: 12px; font-size: 12px; font-weight: bold; }

.menubar { flex: none; display: flex; gap: 5px; height: 21px; padding-left: 6px; }
.menu { padding: 0 5px; height: 21px; line-height: 22px; color: #eee; white-space: nowrap; }
.menu + .menu { padding: 0 5px 0 4px; }
.menu.active + .menu { padding-left: 5px; }
.menu u { text-underline-offset: 2px; }
.menu.active { background: #1c4fc4; }

.toolrow { flex: none; display: flex; gap: 8px; height: 41px; padding-left: 7px; }
.toolrow.first { height: 37px; }
.toolbar { display: flex; align-items: center; }
.grip {
  width: 9px;
  height: 30px;
  padding: 1px 1px 1px 0;
  background: radial-gradient(circle at 2px 2px, #777 1px, transparent 1px) 0 0 / 4px 4px;
  background-clip: content-box;
}
.first .grip { height: 26px; }
.sep { width: 10px; height: 24px; background: linear-gradient(90deg, transparent 4px, #3b3b3b 4px, #3b3b3b 5px, transparent 5px); }
.tool { position: relative; width: 36px; height: 32px; display: flex; align-items: center; justify-content: center; }
.tool svg { width: 24px; height: 24px; }
.menu-tool { width: 55px; justify-content: flex-start; padding-left: 6px; }
.menu-tool.wide { width: 57px; }
.tool .drop { position: absolute; right: 4px; bottom: 1px; width: 10px; height: 6px; color: #232323; }

.combo { position: relative; width: 188px; height: 22px; }
.combo select {
  width: 100%;
  height: 100%;
  appearance: none;
  border: 0;
  padding: 0 24px 0 25px;
  background: #2e2e2e;
  color: #bcbcbc;
  font: inherit;
}
.combo-icon { position: absolute; left: 3px; top: 3px; width: 16px; height: 16px; }
.combo-arrow { position: absolute; right: 6px; top: 8px; width: 10px; height: 6px; color: #e8e8e8; }

.workspace { flex: 1; min-height: 0; display: flex; }
.dock { width: 490px; flex: none; display: flex; flex-direction: column; padding-top: 4px; }
.dock-title {
  display: flex;
  align-items: center;
  gap: 4px;
  height: 23px;
  margin: 0 4px 4px;
  padding-right: 5px;
  background: #393939;
  color: #a8a8a8;
}
.dock-title span { flex: 1; text-align: center; padding-left: 16px; }
.dock-title svg { display: block; width: 14px; height: 14px; }

.tabs { display: flex; height: 29px; }
.tab { color: #8c8c8c; border: 0 solid #888; }
.tab.on { color: #f2f2f2; border-width: 0 1px; background: #444; }
.tabs.top { padding-left: 10px; background: linear-gradient(#888, #888) 0 100% / 100% 1px no-repeat; }
.tabs.top .tab { padding: 0 24px; }
.tabs.top .tab.on { border-top: 4px solid #587cdc; padding: 0 21px 4px; }
.tabs.bottom { margin-top: 6px; background: linear-gradient(#888, #888) 0 0 / 100% 1px no-repeat; }
.tabs.bottom .tab { width: 101px; padding: 0 0 0 7px; }
.tabs.bottom .tab.on { width: 85px; border-bottom: 4px solid #5a80ee; padding: 3px 0 0; }

.box { margin: 0 6px; border: 1px solid #363636; border-top: 0; border-radius: 3px; background: #535353; overflow: hidden; }
.tree { flex: 327 1 0; margin-top: 7px; min-height: 0; }
.props { flex: 355 1 0; min-height: 0; }
table { width: 100%; border-collapse: collapse; table-layout: fixed; }
.c-label { width: 222px; }
.c-prop { width: 100px; }
th { height: 28px; padding: 0 6px; text-align: left; font-weight: normal; background: #292929; color: #d4d4d4; }
th + th { border-left: 1px solid #484848; }
td { padding: 0; height: 18px; }
.app td { height: 15px; line-height: 15px; padding-left: 3px; }
.node { position: relative; display: flex; align-items: center; height: 18px; padding-left: 44px; white-space: nowrap; }
.node .ico { width: 14px; height: 14px; margin-right: 7px; }
.node.root { padding-left: 24px; }
.twist { position: absolute; left: 24px; top: 6px; width: 10px; height: 6px; color: #e0e0e0; z-index: 1; }
.root .twist { left: 4px; }
.parent .twist { transform: rotate(-90deg); }
.node::before { content: ""; position: absolute; left: 29px; top: 0; width: 11px; height: 9px; border: solid #868686; border-width: 0 0 1px 1px; }
.node::after { content: ""; position: absolute; left: 29px; top: 9px; height: 9px; border-left: 1px solid #868686; }
.root::before { left: 9px; }
.last::before { border-bottom-left-radius: 3px; }
.root::after, .last::after { display: none; }

.split-h { height: 22px; display: flex; align-items: center; justify-content: center; }
.split-h i { width: 38px; height: 2px; background: repeating-linear-gradient(90deg, #1f1f1f 0 6px, transparent 6px 8px); }
.split-v { width: 10px; display: flex; align-items: center; justify-content: center; }
.split-v i { width: 2px; height: 38px; background: repeating-linear-gradient(#1f1f1f 0 6px, transparent 6px 8px); }

.mdi { flex: 1; min-width: 0; display: flex; flex-direction: column; }
.view { flex: 1; position: relative; overflow: hidden; background: linear-gradient(#434343, #5a5a5a); }
.model { position: absolute; left: calc(50% - 268px); top: calc(50% - 144px); width: 400px; height: 380px; }
.watermark {
  position: absolute;
  left: 7px;
  top: calc(50% - 103px);
  display: flex;
  align-items: baseline;
  font: 300 68px/80px "Noto Sans CJK SC", sans-serif;
  color: #d0d0d0;
  text-shadow: 2px 2px 0 #3c3c3c, 3px 3px 0 #b8b8b8;
  white-space: nowrap;
}
.watermark span { font: 58px/80px "Liberation Mono", monospace; }
.navcube { position: absolute; right: 0; top: 5px; width: 136px; height: 137px; }
.axes { position: absolute; right: 0; bottom: 23px; width: 45px; height: 50px; }
.doc-tabs { display: flex; height: 34px; background: linear-gradient(#888, #888) 0 1px / 100% 1px no-repeat; }
.doc-tab { display: flex; align-items: center; gap: 11px; width: 242px; padding: 4px 9px 0 4px; background: #444; border: solid #888; border-width: 0 1px; border-bottom: 4px solid #5a80ee; color: #eee; }
.doc-tab svg { width: 14px; height: 17px; }
.doc-tab span { flex: 1; white-space: nowrap; }
.doc-tab button { color: #262626; font-size: 13px; }

.status { flex: none; display: flex; align-items: center; height: 36px; padding: 6px 0 0 2px; white-space: nowrap; }
.msg { flex: 1; }
.nav-style { width: 114px; height: 26px; padding-left: 19px; margin-right: 10px; border-radius: 3px; background: #2e2e2e; }
.dims { width: 150px; overflow: hidden; }
```
